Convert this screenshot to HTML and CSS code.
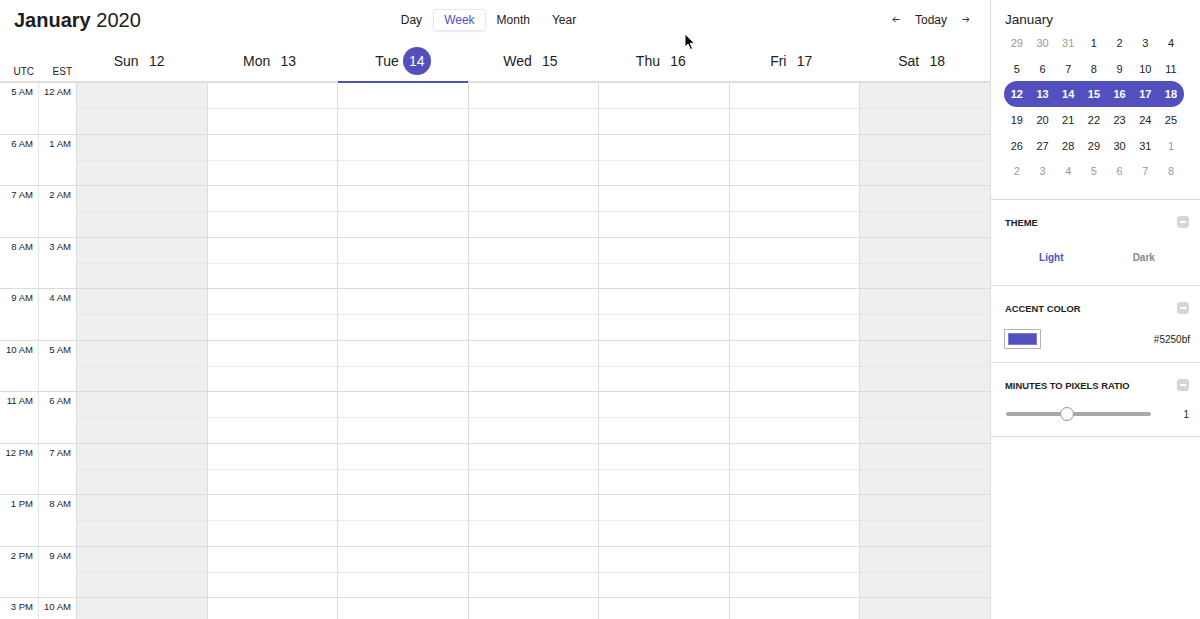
FILE: index.html
```html
<!DOCTYPE html>
<html>
<head>
<meta charset="utf-8">
<link rel="stylesheet" href="styles.css">
</head>
<body>
<div class="app">
  <div class="main">
    <div class="topbar">
      <div class="title"><b>January</b> 2020</div>
      <div class="views">
        <span class="view">Day</span>
        <span class="view active">Week</span>
        <span class="view">Month</span>
        <span class="view">Year</span>
      </div>
      <div class="nav">
        <svg class="arrow" width="8" height="7" viewBox="0 0 8 7"><path d="M7.5 3.5 H1 M3.7 0.8 L1 3.5 L3.7 6.2" fill="none" stroke="#333" stroke-width="1"/></svg>
        <span class="today">Today</span>
        <svg class="arrow" width="8" height="7" viewBox="0 0 8 7"><path d="M0.5 3.5 H7 M4.3 0.8 L7 3.5 L4.3 6.2" fill="none" stroke="#333" stroke-width="1"/></svg>
      </div>
    </div>
    <div class="dayhead">
      <div class="tz utc">UTC</div>
      <div class="tz est">EST</div>
      <div class="dh"><span>Sun</span><span class="num">12</span></div>
      <div class="dh"><span>Mon</span><span class="num">13</span></div>
      <div class="dh cur"><span>Tue</span><span class="num">14</span></div>
      <div class="dh"><span>Wed</span><span class="num">15</span></div>
      <div class="dh"><span>Thu</span><span class="num">16</span></div>
      <div class="dh"><span>Fri</span><span class="num">17</span></div>
      <div class="dh"><span>Sat</span><span class="num">18</span></div>
    </div>
    <div class="grid">
      <div class="row"><div class="t utc">5 AM</div><div class="t est">12 AM</div><div class="c we"></div><div class="c"></div><div class="c"></div><div class="c"></div><div class="c"></div><div class="c"></div><div class="c we"></div></div>
      <div class="row"><div class="t utc">6 AM</div><div class="t est">1 AM</div><div class="c we"></div><div class="c"></div><div class="c"></div><div class="c"></div><div class="c"></div><div class="c"></div><div class="c we"></div></div>
      <div class="row"><div class="t utc">7 AM</div><div class="t est">2 AM</div><div class="c we"></div><div class="c"></div><div class="c"></div><div class="c"></div><div class="c"></div><div class="c"></div><div class="c we"></div></div>
      <div class="row"><div class="t utc">8 AM</div><div class="t est">3 AM</div><div class="c we"></div><div class="c"></div><div class="c"></div><div class="c"></div><div class="c"></div><div class="c"></div><div class="c we"></div></div>
      <div class="row"><div class="t utc">9 AM</div><div class="t est">4 AM</div><div class="c we"></div><div class="c"></div><div class="c"></div><div class="c"></div><div class="c"></div><div class="c"></div><div class="c we"></div></div>
      <div class="row"><div class="t utc">10 AM</div><div class="t est">5 AM</div><div class="c we"></div><div class="c"></div><div class="c"></div><div class="c"></div><div class="c"></div><div class="c"></div><div class="c we"></div></div>
      <div class="row"><div class="t utc">11 AM</div><div class="t est">6 AM</div><div class="c we"></div><div class="c"></div><div class="c"></div><div class="c"></div><div class="c"></div><div class="c"></div><div class="c we"></div></div>
      <div class="row"><div class="t utc">12 PM</div><div class="t est">7 AM</div><div class="c we"></div><div class="c"></div><div class="c"></div><div class="c"></div><div class="c"></div><div class="c"></div><div class="c we"></div></div>
      <div class="row"><div class="t utc">1 PM</div><div class="t est">8 AM</div><div class="c we"></div><div class="c"></div><div class="c"></div><div class="c"></div><div class="c"></div><div class="c"></div><div class="c we"></div></div>
      <div class="row"><div class="t utc">2 PM</div><div class="t est">9 AM</div><div class="c we"></div><div class="c"></div><div class="c"></div><div class="c"></div><div class="c"></div><div class="c"></div><div class="c we"></div></div>
      <div class="row"><div class="t utc">3 PM</div><div class="t est">10 AM</div><div class="c we"></div><div class="c"></div><div class="c"></div><div class="c"></div><div class="c"></div><div class="c"></div><div class="c we"></div></div>
    </div>
  </div>
  <div class="sidebar">
    <div class="minical">
      <div class="mc-title">January</div>
      <div class="mc-grid">
        <span class="o">29</span><span class="o">30</span><span class="o">31</span><span>1</span><span>2</span><span>3</span><span>4</span>
        <span>5</span><span>6</span><span>7</span><span>8</span><span>9</span><span>10</span><span>11</span>
        <div class="mc-sel"><span>12</span><span>13</span><span>14</span><span>15</span><span>16</span><span>17</span><span>18</span></div>
        <span>19</span><span>20</span><span>21</span><span>22</span><span>23</span><span>24</span><span>25</span>
        <span>26</span><span>27</span><span>28</span><span>29</span><span>30</span><span>31</span><span class="o">1</span>
        <span class="o">2</span><span class="o">3</span><span class="o">4</span><span class="o">5</span><span class="o">6</span><span class="o">7</span><span class="o">8</span>
      </div>
    </div>
    <div class="section sec-theme">
      <div class="sec-head"><span>THEME</span><span class="minus"></span></div>
      <div class="theme">
        <span class="opt on">Light</span>
        <span class="opt">Dark</span>
      </div>
    </div>
    <div class="section sec-accent">
      <div class="sec-head"><span>ACCENT COLOR</span><span class="minus"></span></div>
      <div class="accent">
        <span class="swatch"><span class="swatch-fill"></span></span>
        <span class="hex">#5250bf</span>
      </div>
    </div>
    <div class="section sec-ratio">
      <div class="sec-head"><span>MINUTES TO PIXELS RATIO</span><span class="minus"></span></div>
      <div class="ratio">
        <div class="slider"><div class="track"></div><div class="thumb"></div></div>
        <span class="val">1</span>
      </div>
    </div>
  </div>
  <svg class="cursor" width="12" height="18" viewBox="0 0 12 18"><path d="M1 1 L1 14 L4 11 L6.5 16.5 L8.5 15.6 L6.2 10.3 L10.5 10.3 Z" fill="#000" stroke="#fff" stroke-width="1"/></svg>
</div>
</body>
</html>
```
FILE: styles.css
```css
* { box-sizing: border-box; }
body {
  margin: 0;
  font-family: "Liberation Sans", Arial, sans-serif;
  color: #222;
  background: #fff;
}
.app {
  display: flex;
  height: 619px;
  overflow: hidden;
  position: relative;
}
.main {
  width: 990px;
  flex: none;
  display: flex;
  flex-direction: column;
}
.topbar {
  height: 40px;
  flex: none;
  display: grid;
  grid-template-columns: 1fr auto 1fr;
  align-items: center;
  padding: 0 20px 0 14px;
}
.title {
  font-size: 20px;
  color: #1d1d1d;
}
.title b { font-weight: 700; }
.views {
  display: flex;
  align-items: center;
  font-size: 12px;
  margin-right: 7px;
  margin-top: -1px;
}
.view {
  padding: 0 10px;
  height: 22px;
  line-height: 20px;
  border: 1px solid transparent;
  border-radius: 3px;
  color: #222;
}
.view.active {
  border-color: #e8e8e8;
  color: #5250bf;
  box-shadow: 0 1px 2px rgba(0,0,0,0.07);
}
.nav {
  justify-self: end;
  display: flex;
  align-items: center;
  font-size: 12px;
  margin-top: -1px;
}
.arrow { display: block; }
.today { margin: 0 15px 0 15px; }

.dayhead {
  height: 43px;
  flex: none;
  display: flex;
  border-bottom: 2px solid #dedede;
}
.tz {
  font-size: 10px;
  text-align: right;
  padding-right: 5px;
  align-self: flex-end;
  padding-bottom: 4px;
  flex: none;
}
.tz.utc { width: 39px; }
.tz.est { width: 38px; }
.dh {
  flex: 1;
  display: flex;
  align-items: center;
  justify-content: center;
  gap: 4px;
  font-size: 14px;
  padding-top: 1px;
}
.dh .num {
  width: 28px;
  height: 28px;
  border-radius: 50%;
  display: flex;
  align-items: center;
  justify-content: center;
}
.dh.cur {
  border-bottom: 2px solid #5250bf;
  margin-bottom: -2px;
}
.dh.cur .num {
  background: #5250bf;
  color: #fff;
}

.grid {
  flex: 1;
  overflow: hidden;
}
.row {
  display: flex;
  height: 51.5px;
  border-bottom: 1px solid #dcdcdc;
}
.t {
  flex: none;
  font-size: 9.5px;
  text-align: right;
  padding: 3px 5px 0 0;
  border-right: 1px solid #e6e6e6;
  color: #222;
}
.t.utc { width: 39px; }
.t.est { width: 38px; border-right-color: #dcdcdc; }
.c {
  flex: 1;
  position: relative;
  border-right: 1px solid #dcdcdc;
}
.c:last-child { border-right: none; }
.c.we { background: #efefef; }
.c::after {
  content: "";
  position: absolute;
  left: 0;
  right: 0;
  top: 25px;
  border-top: 1px dotted #e0e0e0;
}

.sidebar {
  width: 210px;
  flex: none;
  border-left: 1px solid #dedede;
}
.minical {
  padding: 11px 10px 15px 13px;
}
.mc-title {
  font-size: 13.5px;
  height: 19px;
  line-height: 17px;
  padding-left: 1px;
}
.mc-grid {
  display: grid;
  grid-template-columns: repeat(7, 25.7px);
  grid-auto-rows: 25.7px;
  font-size: 11px;
}
.mc-grid span {
  display: flex;
  align-items: center;
  justify-content: center;
}
.mc-grid .o { color: #999; }
.mc-sel {
  grid-column: 1 / -1;
  display: grid;
  grid-template-columns: repeat(7, 25.7px);
  background: #5250bf;
  border-radius: 13px;
  color: #fff;
  font-weight: 700;
}
.section {
  border-top: 1px solid #dedede;
  padding: 14px 10px 15px 14px;
}
.sec-head {
  height: 16px;
  display: flex;
  align-items: center;
  justify-content: space-between;
  font-size: 9.4px;
  font-weight: 700;
  color: #222;
}
.minus {
  width: 12px;
  height: 12px;
  border-radius: 3px;
  background: #d6d6d6;
  position: relative;
  margin-right: 1px;
}
.minus::after {
  content: "";
  position: absolute;
  left: 3px;
  right: 3px;
  top: 5px;
  height: 2px;
  background: #fff;
}
.theme {
  display: flex;
  margin-top: 14px;
  height: 26px;
  align-items: center;
  font-size: 10px;
  font-weight: 700;
}
.opt {
  flex: 1;
  text-align: center;
  color: #888;
}
.opt.on { color: #5250bf; }
.sec-accent { padding-bottom: 13px; }
.accent {
  margin-top: 13px;
  display: flex;
  align-items: center;
  justify-content: space-between;
}
.swatch {
  width: 37px;
  height: 20px;
  border: 1px solid #b5b5b5;
  padding: 3px;
  display: flex;
  background: #fff;
  margin-left: -1px;
}
.swatch-fill {
  flex: 1;
  background: #5250bf;
  box-shadow: 0 0 0 1px #7d7bd0 inset;
}
.hex {
  font-size: 10px;
}
.sec-ratio { padding-bottom: 12px; border-bottom: 1px solid #dedede; }
.ratio {
  margin-top: 11px;
  height: 20px;
  display: flex;
  align-items: center;
  justify-content: space-between;
}
.slider {
  width: 145px;
  height: 16px;
  position: relative;
  margin-left: 1px;
}
.track {
  position: absolute;
  left: 0;
  right: 0;
  top: 6px;
  height: 4px;
  border-radius: 2px;
  background: #a9a9a9;
}
.thumb {
  position: absolute;
  left: 54px;
  top: 1px;
  width: 14px;
  height: 14px;
  border-radius: 50%;
  background: #fafafa;
  border: 1px solid #999;
}
.val {
  font-size: 10px;
  margin-right: 1px;
}
.cursor {
  position: absolute;
  left: 684px;
  top: 33px;
}
```
